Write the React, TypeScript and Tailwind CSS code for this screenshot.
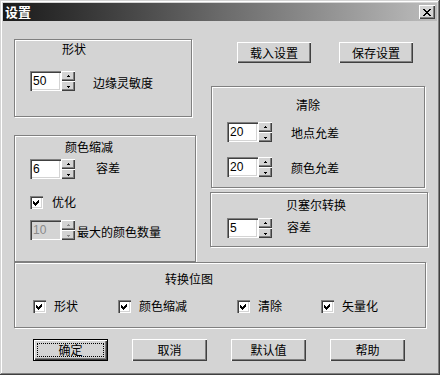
import React from "react";

const FONT = { fontFamily: '"Noto Sans CJK SC", "Noto Sans", sans-serif' };

const raised =
  "shadow-[inset_1px_1px_0_#ffffff,inset_-1px_-1px_0_#404040,inset_-2px_-2px_0_#808080]";
const sunken =
  "shadow-[inset_1px_1px_0_#808080,inset_2px_2px_0_#404040,inset_-1px_-1px_0_#ffffff,inset_-2px_-2px_0_#d4d4d4]";

const Arrow = ({ up, disabled }: { up?: boolean; disabled?: boolean }) => (
  <svg width="5" height="3" viewBox="0 0 5 3" shapeRendering="crispEdges" fill={disabled ? "#8a8a8a" : "#000"}>
    {up ? (
      <>
        <rect x="2" y="0" width="1" height="1" />
        <rect x="1" y="1" width="3" height="1" />
      </>
    ) : (
      <>
        <rect x="1" y="1" width="3" height="1" />
        <rect x="2" y="2" width="1" height="1" />
      </>
    )}
  </svg>
);

const Spin = ({ value, disabled }: { value: string; disabled?: boolean }) => (
  <div className="flex h-[20px] w-[45px] shrink-0">
    <div
      className={`flex h-[20px] w-[31px] items-center pl-[3px] text-[12px] ${sunken} ${
        disabled ? "bg-[#d4d4d4] text-[#8a8a8a]" : "bg-white text-black"
      }`}
      style={{ fontFamily: '"Liberation Sans", Arial, sans-serif' }}
    >
      {value}
    </div>
    <div className="flex w-[14px] flex-col">
      <div className={`flex h-[10px] items-center justify-center bg-[#d4d4d4] ${raised}`}>
        <Arrow up disabled={disabled} />
      </div>
      <div className={`flex h-[10px] items-center justify-center bg-[#d4d4d4] ${raised}`}>
        <Arrow disabled={disabled} />
      </div>
    </div>
  </div>
);

const Check = ({ label, gap = "ml-[8px]" }: { label: string; gap?: string }) => (
  <div className="flex items-center">
    <div className={`flex h-[13px] w-[13px] shrink-0 items-center justify-center bg-white ${sunken}`}>
      <svg width="7" height="7" viewBox="0 0 7 7" shapeRendering="crispEdges">
        <polygon points="0,2 2,4 6,0 6,3 2,7 0,5" fill="#000" />
      </svg>
    </div>
    <span className={`${gap} text-[12px] leading-[14px] text-black`}>{label}</span>
  </div>
);

const Btn = ({ label, def }: { label: string; def?: boolean }) =>
  def ? (
    <div className="h-[22px] w-[75px] border border-black">
      <div className={`flex h-full w-full items-center justify-center bg-[#d4d4d4] p-[3px] ${raised}`}>
        <div className="flex h-full w-full items-center justify-center border border-dotted border-black text-[12px] leading-[14px]">
          {label}
        </div>
      </div>
    </div>
  ) : (
    <div className={`flex h-[22px] w-[75px] items-center justify-center bg-[#d4d4d4] text-[12px] leading-[14px] ${raised}`}>
      {label}
    </div>
  );

const Group = ({ className, children }: { className: string; children: React.ReactNode }) => (
  <div
    className={`flex flex-col border border-[#808080] shadow-[inset_1px_1px_0_#ffffff,1px_1px_0_#ffffff] ${className}`}
  >
    {children}
  </div>
);

const Title = ({ text, pl, pt }: { text: string; pl: string; pt: string }) => (
  <div className={`${pl} ${pt} text-[12px] leading-[14px] text-black`}>{text}</div>
);

export default function App() {
  return (
    <div
      className="relative h-[375px] w-[440px] overflow-hidden bg-[#d4d4d4] p-[3px] text-black shadow-[inset_-1px_-1px_0_#404040,inset_1px_1px_0_#d4d4d4,inset_-2px_-2px_0_#808080,inset_2px_2px_0_#ffffff]"
      style={FONT}
    >
      {/* title bar */}
      <div className="flex h-[18px] items-center justify-between bg-gradient-to-r from-[#1a1a1a] via-[#6a6a6a] to-[#bdbdbd] pl-[2px] pr-[2px]">
        <span className="text-[13px] font-bold leading-[16px] text-white">设置</span>
        <div className={`flex h-[14px] w-[16px] items-center justify-center bg-[#d4d4d4] ${raised}`}>
          <svg width="8" height="7" viewBox="0 0 8 7" shapeRendering="crispEdges">
            <path d="M0 0h2l2 2.5L6 0h2L5 3.5 8 7H6L4 4.5 2 7H0l3-3.5z" fill="#000" />
          </svg>
        </div>
      </div>

      {/* content */}
      <div className="flex flex-col pl-[11px] pt-[18px]">
        <div className="flex items-start">
          {/* left column */}
          <div className="flex w-[182px] flex-col">
            <Group className="h-[78px] w-[178px]">
              <Title text="形状" pl="pl-[47px]" pt="pt-[2px]" />
              <div className="mt-[15px] flex items-center pl-[15px]">
                <Spin value="50" />
                <span className="ml-[18px] mt-[4px] text-[12px] leading-[14px]">边缘灵敏度</span>
              </div>
            </Group>
            <Group className="mt-[18px] h-[127px] w-[182px]">
              <Title text="颜色缩减" pl="pl-[50px]" pt="pt-[4px]" />
              <div className="mt-[5px] flex items-start pl-[15px]">
                <Spin value="6" />
                <span className="ml-[21px] mt-[2px] text-[12px] leading-[14px]">容差</span>
              </div>
              <div className="mt-[16px] pl-[15px]">
                <Check label="优化" gap="ml-[9px]" />
              </div>
              <div className="mt-[11px] flex items-center pl-[15px]">
                <Spin value="10" disabled />
                <span className="ml-[2px] mt-[4px] text-[12px] leading-[14px]">最大的颜色数量</span>
              </div>
            </Group>
          </div>

          {/* right column */}
          <div className="ml-[14px] flex w-[218px] flex-col">
            <div className="mt-[3px] flex gap-[28px] pl-[27px]">
              <div className={`flex h-[21px] w-[74px] items-center justify-center bg-[#d4d4d4] text-[12px] leading-[14px] ${raised}`}>
                载入设置
              </div>
              <div className={`flex h-[21px] w-[74px] items-center justify-center bg-[#d4d4d4] text-[12px] leading-[14px] ${raised}`}>
                保存设置
              </div>
            </div>
            <Group className="ml-[1px] mt-[23px] h-[102px] w-[214px]">
              <Title text="清除" pl="pl-[84px]" pt="pt-[11px]" />
              <div className="mt-[10px] flex items-center pl-[15px]">
                <Spin value="20" />
                <span className="ml-[19px] mt-[1px] text-[12px] leading-[14px]">地点允差</span>
              </div>
              <div className="mt-[15px] flex items-center pl-[15px]">
                <Spin value="20" />
                <span className="ml-[19px] mt-[1px] text-[12px] leading-[14px]">颜色允差</span>
              </div>
            </Group>
            <Group className="mt-[4px] h-[55px] w-[218px]">
              <Title text="贝塞尔转换" pl="pl-[75px]" pt="pt-[5px]" />
              <div className="mt-[6px] flex items-start pl-[16px]">
                <Spin value="5" />
                <span className="ml-[15px] mt-[2px] text-[12px] leading-[14px]">容差</span>
              </div>
            </Group>
          </div>
        </div>

        {/* bottom group */}
        <Group className="h-[66px] w-[412px]">
          <Title text="转换位图" pl="pl-[150px]" pt="pt-[9px]" />
          <div className="mt-[13px] flex pl-[18px]">
            <div className="w-[85px]">
              <Check label="形状" />
            </div>
            <div className="w-[119px]">
              <Check label="颜色缩减" />
            </div>
            <div className="w-[84px]">
              <Check label="清除" />
            </div>
            <div>
              <Check label="矢量化" />
            </div>
          </div>
        </Group>

        {/* buttons */}
        <div className="mt-[11px] flex gap-[24px] pl-[19px]">
          <Btn label="确定" def />
          <Btn label="取消" />
          <Btn label="默认值" />
          <Btn label="帮助" />
        </div>
      </div>
    </div>
  );
}
